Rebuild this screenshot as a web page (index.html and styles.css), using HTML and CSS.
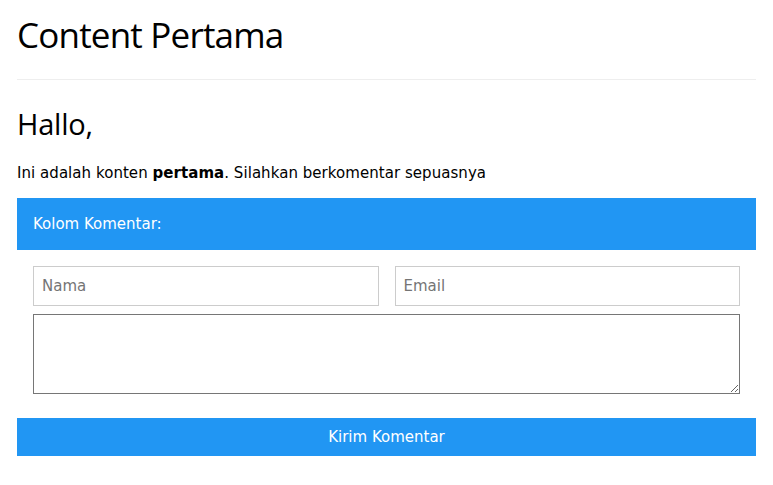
FILE: index.html
```html
<!DOCTYPE html>
<html lang="id">
<head>
<meta charset="utf-8">
<title>Content Pertama</title>
<link rel="stylesheet" href="styles.css">
</head>
<body>
<div class="page">
  <h1 class="title">Content Pertama</h1>
  <hr class="divider">
  <h2 class="greeting">Hallo,</h2>
  <p class="intro">Ini adalah konten <b>pertama</b>. Silahkan berkomentar sepuasnya</p>
  <div class="comment-head">Kolom Komentar:</div>
  <form class="comment-form">
    <div class="field-row">
      <input class="field" type="text" placeholder="Nama">
      <input class="field" type="text" placeholder="Email">
    </div>
    <textarea class="message"></textarea>
  </form>
  <button class="submit" type="button">Kirim Komentar</button>
</div>
</body>
</html>
```
FILE: styles.css
```css
html, body {
  margin: 0;
  padding: 0;
  background: #fff;
}
body {
  font-family: "DejaVu Sans", Verdana, sans-serif;
  font-size: 15px;
  line-height: 1.5;
  color: #000;
}
.page {
  padding: 1px 17px 20px;
}
.title {
  font-family: "Open Sans", "Noto Sans", sans-serif;
  font-weight: 400;
  font-size: 35px;
  letter-spacing: -0.8px;
  line-height: 52px;
  margin: 8px 0 0;
}
.divider {
  border: 0;
  border-top: 1px solid #eee;
  margin: 18px 0 0;
}
.greeting {
  font-family: "Open Sans", "Noto Sans", sans-serif;
  font-weight: 400;
  font-size: 29px;
  letter-spacing: -0.2px;
  line-height: 44px;
  margin: 22px 0 0;
}
.intro {
  margin: 16px 0 0;
  line-height: 22px;
  letter-spacing: 0.05px;
}
.comment-head {
  margin-top: 14px;
  background: #2196F3;
  color: #fff;
  padding: 15px 16px;
  line-height: 22px;
}
.comment-form {
  padding: 16px 16px 0;
  display: flex;
  flex-direction: column;
  gap: 8px;
}
.field-row {
  display: flex;
  gap: 16px;
}
.field {
  flex: 1;
  min-width: 0;
  box-sizing: border-box;
  height: 40px;
  padding: 8px;
  border: 1px solid #ccc;
  font-family: "DejaVu Sans", Verdana, sans-serif;
  font-size: 15px;
  margin: 0;
  outline: none;
}
.field::placeholder {
  color: #757575;
}
.message {
  box-sizing: border-box;
  height: 80px;
  width: 100%;
  margin: 0;
  border: 1px solid #767676;
  font-family: "DejaVu Sans", Verdana, sans-serif;
  font-size: 15px;
  padding: 2px;
}
.submit {
  display: block;
  width: 100%;
  margin-top: 24px;
  height: 38px;
  border: 0;
  background: #2196F3;
  color: #fff;
  font-family: "DejaVu Sans", Verdana, sans-serif;
  font-size: 15px;
  padding: 0 16px;
}
```
